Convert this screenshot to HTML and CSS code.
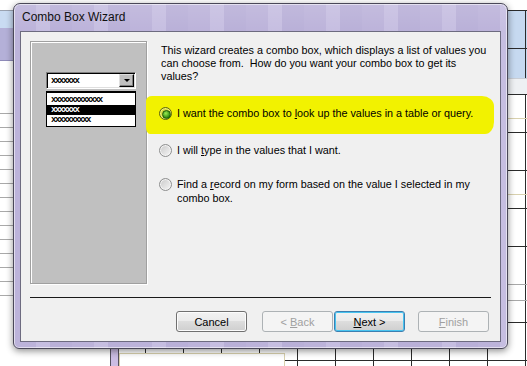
FILE: index.html
```html
<!DOCTYPE html>
<html lang="en">
<head>
  <meta charset="UTF-8" />
  <title>Combo Box Wizard</title>
  <link rel="stylesheet" href="styles.css">
</head>
<body>
  <!-- form design view behind the wizard -->
  <div class="backdrop">
    <div class="nav-pane">
      <div class="nav-head"></div>
      <div class="nav-search"></div>
      <div class="nav-list"></div>
    </div>
    <div class="splitter"></div>
    <div class="form-header"></div>
    <div class="section-bar"></div>
    <div class="form-detail"></div>
    <div class="ctl-line ctl-a"></div>
    <div class="ctl-line ctl-b"></div>
    <div class="ctl-line ctl-c"></div>
    <div class="ctl-line ctl-d"></div>
    <div class="ctl-box"></div>
  </div>

  <div class="dialog">
    <div class="titlebar">Combo Box Wizard</div>
    <div class="client">
      <div class="wizard-body">
        <div class="preview">
          <div class="combo">
            <span class="combo-text">xxxxxxx</span>
            <span class="combo-btn"></span>
          </div>
          <ul class="combo-list">
            <li>xxxxxxxxxxxxx</li>
            <li class="selected">xxxxxxx</li>
            <li>xxxxxxxxxx</li>
          </ul>
        </div>

        <div class="content">
          <p class="intro">This wizard creates a combo box, which displays a list of values you<br>can choose from.&nbsp; How do you want your combo box to get its<br>values?</p>

          <label class="option marked">
            <span class="radio checked"></span>
            <span>I want the combo box to <u>l</u>ook up the values in a table or query.</span>
          </label>
          <label class="option">
            <span class="radio"></span>
            <span>I will <u>t</u>ype in the values that I want.</span>
          </label>
          <label class="option two-line">
            <span class="radio"></span>
            <span>Find a <u>r</u>ecord on my form based on the value I selected in my<br>combo box.</span>
          </label>
        </div>
      </div>

      <div class="separator"></div>

      <div class="buttons">
        <button class="btn cancel">Cancel</button>
        <button class="btn back" disabled>&lt; <u>B</u>ack</button>
        <button class="btn next default"><u>N</u>ext &gt;</button>
        <button class="btn" disabled><u>F</u>inish</button>
      </div>
    </div>
  </div>
</body>
</html>
```

FILE: styles.css
```css
* {
  box-sizing: border-box;
}

body {
  margin: 0;
  width: 527px;
  height: 366px;
  overflow: hidden;
  position: relative;
  background: #fff;
  font-family: Tahoma, "Liberation Sans", Arial, sans-serif;
  font-size: 10.8px;
  color: #000;
}

/* ---- backdrop: Access form in design view ---- */

.backdrop {
  position: absolute;
  inset: 0;
}

.nav-pane {
  position: absolute;
  left: 0;
  top: 10px;
  width: 110px;
  bottom: 0;
  border-top: 1px solid #9aa2b0;
  background: #fff;
}

.nav-head {
  height: 17px;
  background: #c9dbf2;
}

.nav-search {
  height: 33px;
  background: #b4b0d8;
  border-bottom: 1px solid #8e8ab8;
}

.nav-list {
  margin-top: 52px;
  height: 185px;
  background: repeating-linear-gradient(to bottom, #a9a9a9 0 1px, transparent 1px 14px);
}

.splitter {
  position: absolute;
  left: 110px;
  top: 10px;
  width: 9px;
  bottom: 0;
  background: #cbbde3;
  border-left: 1px solid #55525f;
  border-right: 1px solid #55525f;
}

.form-header,
.form-detail {
  position: absolute;
  left: 119px;
  right: 0;
  background-image:
    linear-gradient(to right, #2b2b2b 1px, transparent 1px),
    linear-gradient(to bottom, #2b2b2b 1px, transparent 1px);
  background-size: 38px 38px;
  background-position: 26px 0;
}

.form-header {
  top: 10px;
  height: 68px;
  background-color: #c6d9f0;
}

.section-bar {
  position: absolute;
  left: 119px;
  right: 0;
  top: 78px;
  height: 16px;
  background: #eef0f3;
  border-top: 1px solid #c9cdd4;
}

.form-detail {
  top: 94px;
  bottom: 0;
  background-color: #fff;
}

.ctl-line {
  position: absolute;
  left: 470px;
  right: 0;
  height: 1px;
}

.ctl-a { top: 118px; background: #d9d1ae; }
.ctl-b { top: 194px; background: #d9d1ae; }
.ctl-c { top: 284px; background: #a8a8a8; }
.ctl-d { top: 300px; background: #a8a8a8; }

.ctl-box {
  position: absolute;
  left: 119px;
  top: 353px;
  width: 166px;
  height: 20px;
  background: #fff;
  border: 1px solid #d9d1ae;
}

/* ---- wizard dialog ---- */

.dialog {
  position: absolute;
  left: 13px;
  top: 3px;
  width: 495px;
  height: 346px;
  display: flex;
  flex-direction: column;
  padding: 0 6px 6px;
  border: 1px solid #4a4858;
  border-radius: 7px 7px 6px 6px;
  background:
    linear-gradient(to bottom, rgba(255, 255, 255, 0.12), rgba(255, 255, 255, 0) 28px),
    repeating-linear-gradient(90deg, #bcb3da 0 22px, #c6bee1 22px 36px, #b9b0d8 36px 58px);
  box-shadow: 0 2px 7px rgba(0, 0, 0, 0.45), inset 0 0 0 1px rgba(255, 255, 255, 0.55);
}

.titlebar {
  height: 27px;
  line-height: 27px;
  padding-left: 2px;
  font-family: "Segoe UI", "Liberation Sans", Arial, sans-serif;
  font-size: 12px;
  color: #101010;
}

.client {
  height: 311px;
  display: flex;
  flex-direction: column;
  padding: 9px;
  background: #f0f0f0;
  border: 1px solid #6d6b80;
}

.wizard-body {
  display: flex;
  height: 243px;
}

.preview {
  width: 117px;
  padding: 30px 0 0 15px;
  background: #c0c0c0;
  border: 1px solid #a0a0a0;
  box-shadow: 1px 1px 0 #fff, inset 1px 1px 0 #fff;
}

.combo {
  display: flex;
  align-items: center;
  justify-content: space-between;
  width: 90px;
  height: 17px;
  padding: 0 1px 0 4px;
  background: #fff;
  border: 1px solid;
  border-color: #808080 #fff #fff #808080;
  box-shadow: inset 1px 1px 0 #000, inset -1px -1px 0 #dfdfdf;
}

.combo-text,
.combo-list li {
  font-family: "Liberation Mono", monospace;
  font-weight: bold;
  font-size: 9px;
  letter-spacing: -1.5px;
}

.combo-btn {
  display: flex;
  align-items: center;
  justify-content: center;
  width: 15px;
  height: 13px;
  background: #c0c0c0;
  border: 1px solid;
  border-color: #dfdfdf #000 #000 #dfdfdf;
  box-shadow: inset -1px -1px 0 #808080;
}

.combo-btn::after {
  content: "";
  border-left: 3px solid transparent;
  border-right: 3px solid transparent;
  border-top: 3px solid #000;
}

.combo-list {
  list-style: none;
  margin: 2px 0 0;
  padding: 2px 0 0;
  width: 90px;
  height: 36px;
  background: #fff;
  border: 1px solid #000;
  border-top-width: 2px;
}

.combo-list li {
  height: 10px;
  line-height: 10px;
  padding-left: 4px;
}

.combo-list li.selected {
  background: #000;
  color: #fff;
}

.content {
  flex: 1;
  margin-left: 12px;
  line-height: 13px;
  white-space: nowrap;
}

.intro {
  margin: 0;
  padding: 3px 0 0 2px;
}

.option {
  position: relative;
  display: flex;
  align-items: flex-start;
  gap: 5px;
  margin-top: 24px;
}

.option.two-line {
  margin-top: 20px;
  line-height: 14px;
}

/* highlighter stroke */
.option.marked::before {
  content: "";
  position: absolute;
  left: -13px;
  right: -3px;
  top: -11px;
  bottom: -14px;
  z-index: -1;
  background: #f2f200;
  border-radius: 6px 12px 9px 4px / 5px 10px 12px 7px;
}

.option.marked {
  z-index: 0;
}

.radio {
  position: relative;
  flex: none;
  width: 13px;
  height: 13px;
  border-radius: 50%;
  border: 1px solid #8e8f8f;
  background: linear-gradient(135deg, #c9c9c9, #f6f6f6);
  box-shadow: inset 0 0 0 1px #f4f4f4;
}

.option.two-line .radio {
  margin-top: 1px;
}

.radio.checked {
  border-color: #5c6414;
  background: linear-gradient(135deg, #c9cc30, #f0f060);
  box-shadow: inset 0 0 0 1px #f0f27a;
}

.radio.checked::after {
  content: "";
  position: absolute;
  left: 2px;
  top: 2px;
  width: 7px;
  height: 7px;
  border-radius: 50%;
  border: 1px solid #1f5a08;
  background: radial-gradient(circle at 40% 35%, #9cec50, #2c8a10 70%);
}

.separator {
  height: 1px;
  margin-top: 13px;
  background: #1a1a1a;
}

.buttons {
  display: flex;
  justify-content: flex-end;
  margin-top: 13px;
  padding-right: 2px;
}

.btn {
  width: 71px;
  height: 21px;
  padding: 0;
  font-family: inherit;
  font-size: 11px;
  color: #000;
  border: 1px solid #707070;
  border-radius: 3px;
  background: linear-gradient(to bottom, #f2f2f2 0%, #ebebeb 45%, #dddddd 50%, #cfcfcf 100%);
  box-shadow: inset 0 0 0 1px #fcfcfc;
}

.btn.cancel {
  margin-right: 15px;
}

.btn.back {
  margin-right: 1px;
}

.btn.next {
  margin-right: 13px;
}

.btn.default {
  border-color: #3c7fb1;
  box-shadow: inset 0 0 0 1px #48c4f0;
}

.btn:disabled {
  color: #a0a0a0;
  border-color: #adb2b5;
  background: #f4f4f4;
  box-shadow: none;
}
```
